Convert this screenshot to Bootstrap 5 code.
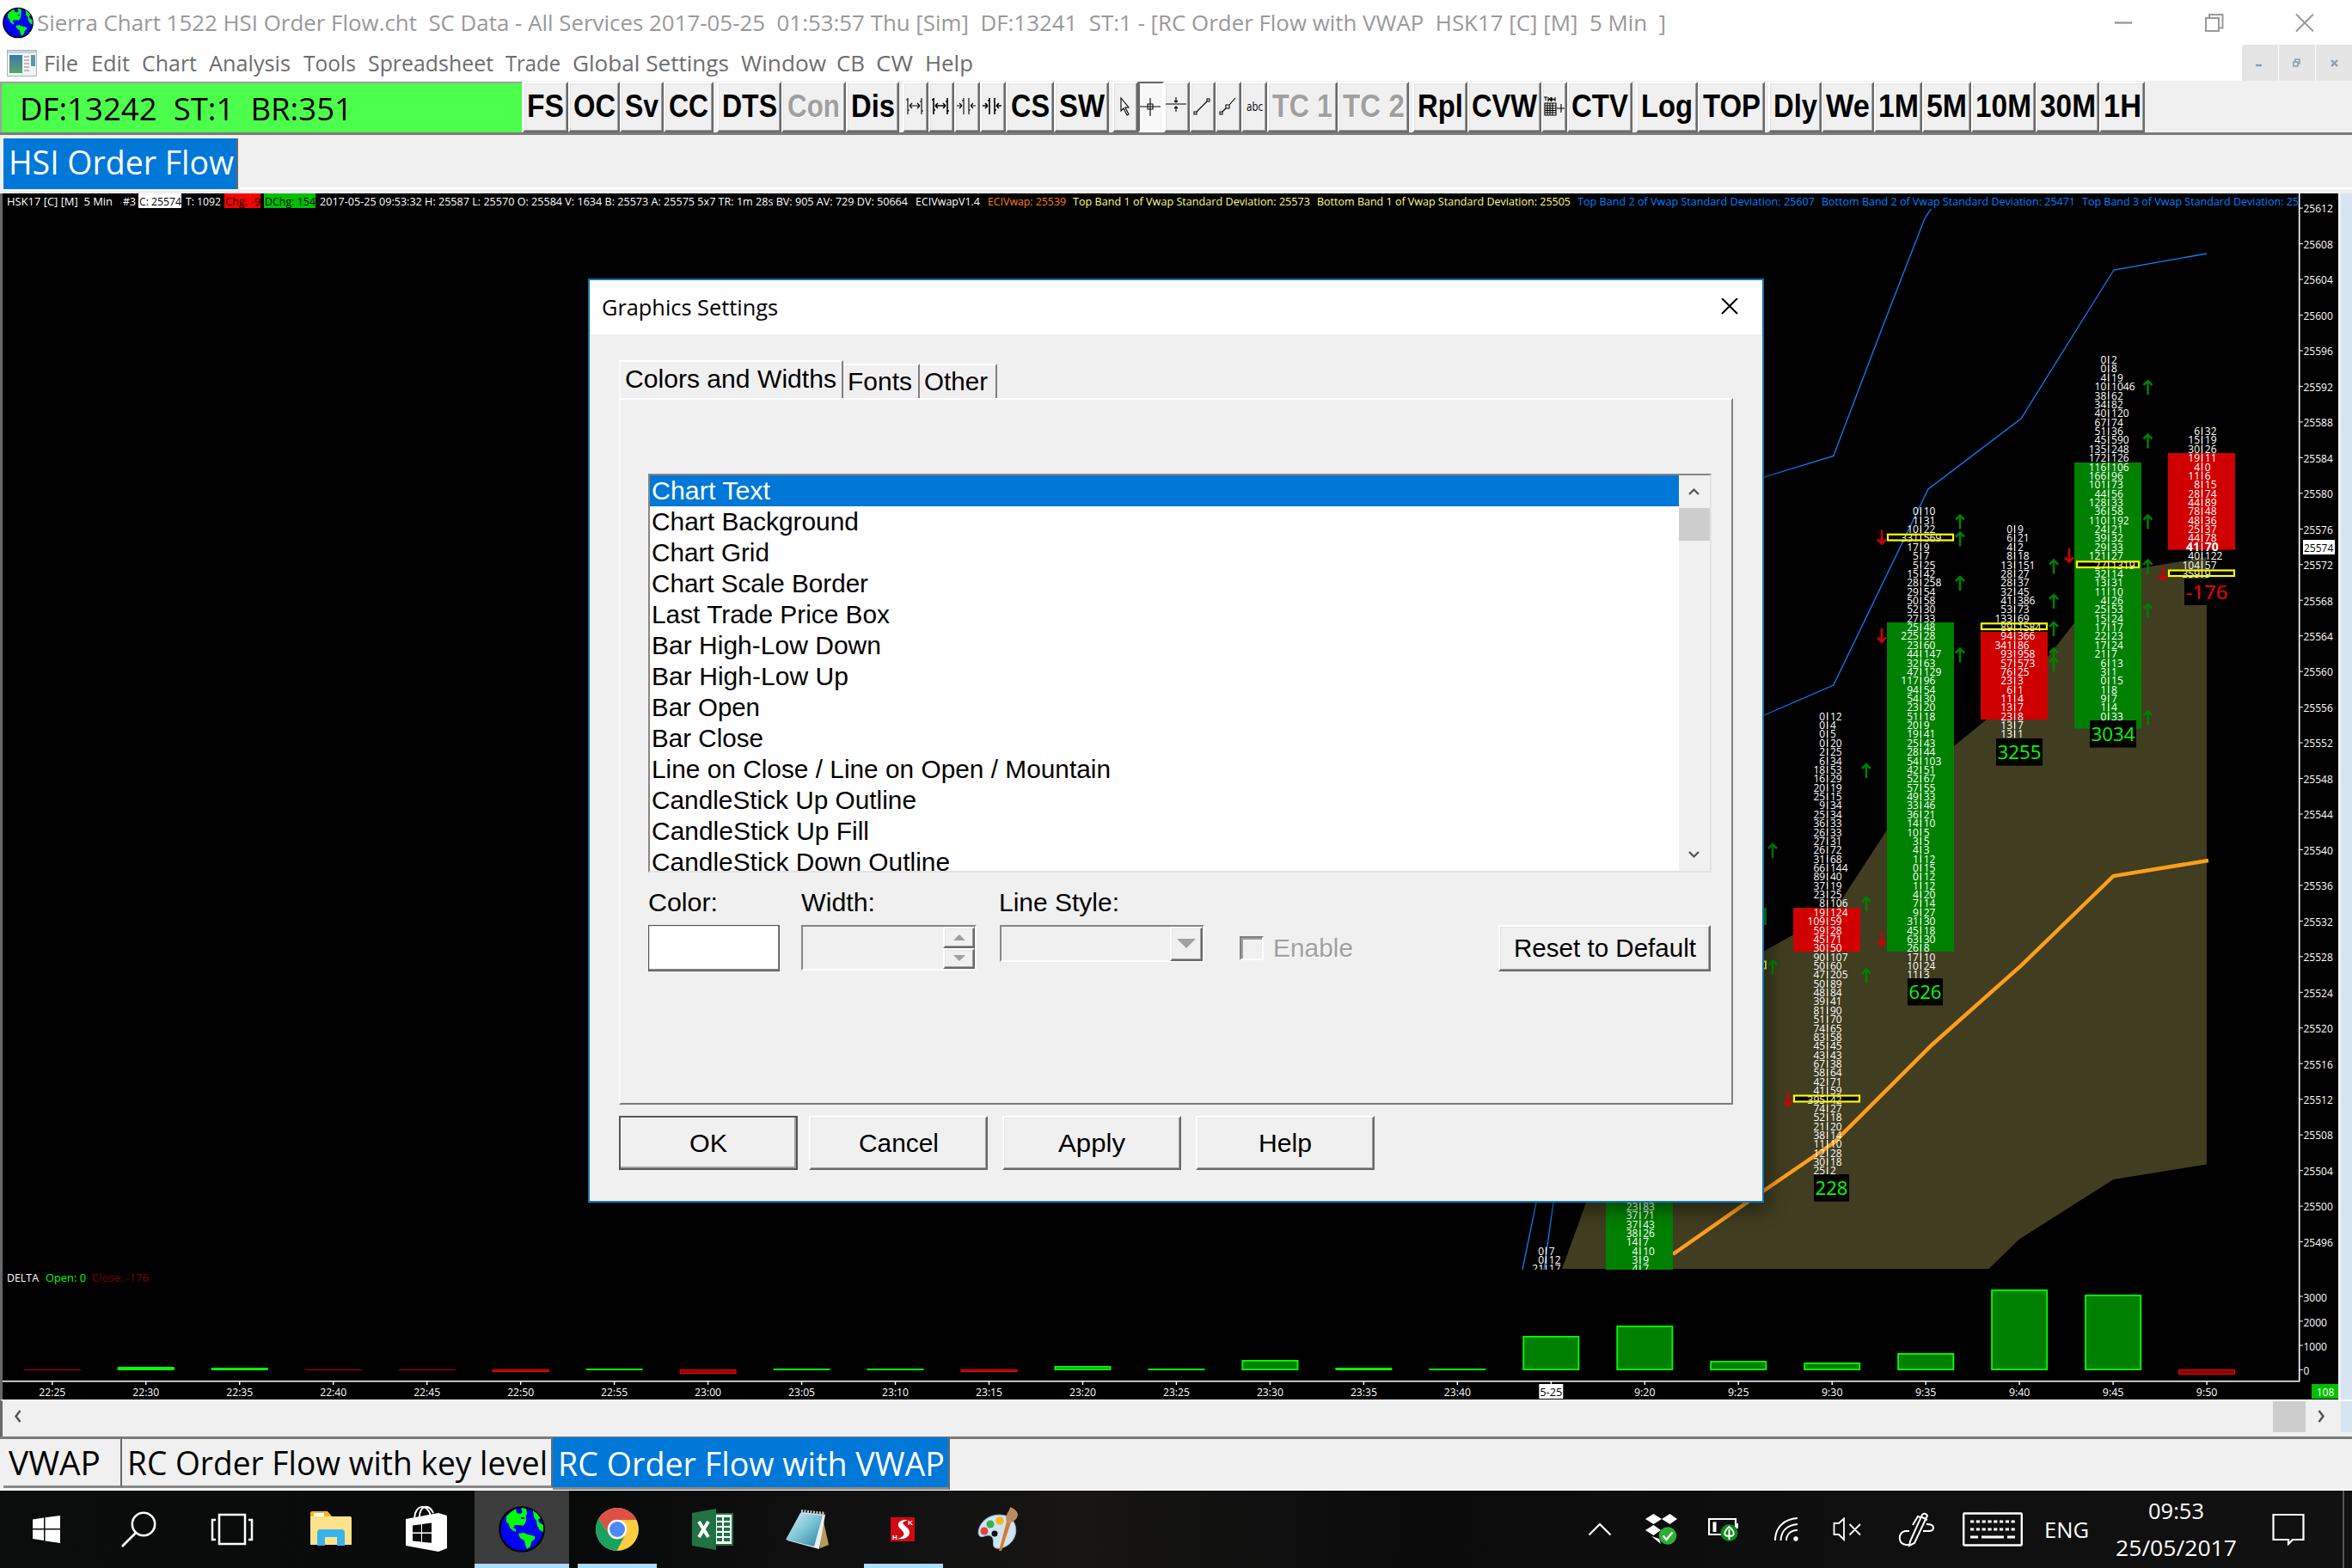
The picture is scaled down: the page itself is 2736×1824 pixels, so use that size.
<!DOCTYPE html>
<html lang="en">
<head>
<meta charset="utf-8">
<title>Sierra Chart - Graphics Settings</title>
<link rel="stylesheet" href="https://cdn.jsdelivr.net/npm/bootstrap@5.3.0/dist/css/bootstrap.min.css">
<style>
  html, body { width: 2736px; height: 1824px; overflow: hidden; }
  body { background: #f0f0f0; color: #000; font-family: "Open Sans", "Noto Sans", sans-serif; font-size: 26px; line-height: 1; }
  .arial { font-family: "Liberation Sans", Arial, sans-serif; }
  .fit { display: inline-block; white-space: pre; transform-origin: 0 50%; }
  svg { display: block; flex: none; }
  .raised { background: #f0f0f0; border: 2px solid; border-color: #fff #696969 #696969 #fff; box-shadow: inset -1px -1px 0 #a0a0a0, inset 1px 1px 0 #e3e3e3; }
  .sunken { border: 2px solid; border-color: #868686 #fff #fff #868686; }

  .titlebar { height: 52px; background: #fff; color: #999; padding-left: 3px; }
  .titlebar .caption { padding-left: 4px; line-height: 53px; }
  .win-ctl { margin-right: 45px; }
  .menubar { height: 42px; background: #fff; color: #6d6d6d; padding-left: 8px; }
  .menubar .entries { padding-left: 8px; line-height: 42px; }
  .menu-gap { display: inline-block; }
  .mdi span { width: 42px; height: 42px; background: #e5e5e5; }
  .mdi { gap: 1px; }
  .toolbar { height: 63px; border-bottom: 3px solid #7b7b7b; }
  .status { width: 607px; height: 59px; margin-top: 1px; padding-left: 21px; background: #4dff4d; border-top: 2px solid #a0a0a0; border-left: 2px solid #a0a0a0; font-size: 37px; line-height: 57px; }
  .tools { margin-left: 1px; padding-top: 1px; }
  .tb { height: 59px; padding-bottom: 3px; font-size: 37px; font-weight: bold; }
  .tb svg { margin-top: 3px; }
  .tb.off { color: #a0a0a0; text-shadow: 1px 1px 0 #fff; }
  .tb.down { background: #f8f8f8; border-color: #696969 #fff #fff #696969; box-shadow: none; }
  .tb.tiny { font-family: "Open Sans", sans-serif; font-weight: normal; font-size: 15px; }
  .tb.gapped { margin-right: 4px; }
  .books-top { height: 68px; padding: 4px 0 0 4px; }
  .books-top .booktab { width: 273px; height: 59px; padding-left: 6px; line-height: 55px; }
  .books-top .filler { height: 59px; border-bottom: 2px solid #fff; }
  .booktab { font-size: 38px; }
  .booktab.current { background: #0078d7; color: #fff; border-right: 2px solid #696969; }
  .chart-row { height: 1403px; border-left: 3px solid #696969; }
  .edge { width: 13px; background: #d7e4f2; }
  .hscroll { height: 43px; border-top: 2px solid #fff; border-left: 3px solid #696969; }
  .hscroll .edge, .hscroll .thumb { height: 36px; }
  .hscroll .thumb { width: 38px; background: #cdcdcd; }
  .books-bottom { height: 63px; border-top: 3px solid #7b7b7b; border-bottom: 2px solid #fff; padding-left: 4px; }
  .books-bottom .booktab { height: 57px; padding-left: 6px; line-height: 54px; border-bottom: 3px solid #8a8a8a; border-right: 2px solid #696969; }
  .books-bottom .current { height: 61px; margin-top: -2px; line-height: 61px; }
  .bt-a { width: 138px; } .bt-b { width: 501px; } .bt-c { width: 462px; }

  .taskbar { height: 90px; color: #fff; background: linear-gradient(90deg, #0b0c0c 0, #080909 25%, #101010 35%, #161514 46%, #0b0b0b 60%, #0f0f0f 80%, #111 100%); }
  .tile { flex: none; width: 110.8px; height: 90px; }
  .tile.sys { width: 108px; }
  .tile.lead-app { margin-left: 6px; }
  .tile.active { background: #3c3c3c; border-bottom: 5px solid #a9dcff; padding-top: 5px; }
  .tile.running { position: relative; }
  .tile.running::after { content: ""; position: absolute; left: 10px; right: 9px; bottom: 0; height: 5px; background: #a9dcff; }
  .cell { width: 72.4px; }
  .cell.spk { width: 69px; }
  .cell.pen { width: 92px; }
  .cell.mid { width: 86px; }
  .cell.note { width: 94px; }
  .clock { width: 168px; line-height: 43px; }
  .showdesk { width: 11px; height: 90px; border-left: 2px solid #555; }

  .dlg { position: absolute; left: 684px; top: 324px; width: 1368px; height: 1075px; border: 2px solid #1176b0; background: #f0f0f0; box-shadow: 4px 8px 22px rgba(0,0,0,.45); }
  .dlg-head { height: 63px; background: #fff; padding: 0 28px 2px 14px; }
  .dlg-body { padding: 33px 34px 0 34px; font-size: 29.5px; }
  .tabs { height: 41px; }
  .tabs > div { height: 40px; border-top: 2px solid #fff; border-right: 2px solid #808080; padding-left: 5px; line-height: 37px; }
  .tabs > .first { height: 44px; padding-left: 5px; width: 261px; border-left: 2px solid #fafafa; line-height: 40px; position: relative; background: #f0f0f0; }
  .tab-f { width: 89px; } .tab-o { width: 90px; }
  .page { height: 822px; border: 2px solid; border-color: #fff #808080 #7b7b7b #fafafa; padding: 86px 23px 0 32px; }
  .listbox { height: 464px; background: #fff; border: 2px solid; border-color: #868686 #e3e3e3 #e3e3e3 #868686; }
  .listbox .names { height: 460px; }
  .listbox .names div { height: 36px; line-height: 36px; padding-left: 2px; }
  .listbox .names .sel { background: #0078d7; color: #fff; }
  .vscroll { width: 36px; background: #f0f0f0; }
  .vscroll .knob { height: 38px; background: #cdcdcd; }
  .lbl { height: 36px; margin-top: 17px; line-height: 36px; }
  .lbl-c { width: 178px; } .lbl-w { width: 230px; }
  .swatch { width: 153px; height: 54px; background: #fff; border: 1px solid #555; box-shadow: inset -1px -2px 0 #808080, inset 1px 1px 0 #e3e3e3; }
  .spin { width: 204px; height: 53px; margin-left: 25px; }
  .spin .raised { width: 37px; height: 25px; }
  .combo { width: 238px; height: 43px; margin-left: 27px; }
  .combo .raised { width: 38px; height: 40px; }
  .chk { width: 28px; height: 28px; margin: 13px 11px 0 41px; border: 2px solid; border-color: #808080 #fff #fff #808080; box-shadow: inset 2px 2px 0 #a0a0a0; }
  .gray { color: #a0a0a0; text-shadow: 1px 1px 0 #fff; line-height: 54px; }
  .push { height: 63px; width: 208px; }
  .push.default { border-color: #555; box-shadow: inset -2px -2px 0 #a0a0a0, inset 1px 1px 0 #fff; }
  .push + .push { margin-left: 17px; }
  .push.default + .push { margin-left: 13px; }
  .reset { width: 247px; height: 54px; margin-left: 169px; }
  .dlg-foot { padding-top: 13px; }
</style>
</head>
<body>
<svg width="0" height="0" class="position-absolute">
  <symbol id="globe" viewBox="0 0 54 54">
    <circle cx="27" cy="27" r="25.6" fill="#00f" stroke="#000" stroke-width="2.4"/>
    <path fill="#0f0" d="M9 12L13 8L20 3L21 8L25 9L28 7L26 4L27 2L32 3L33 8L32 12L32 17L30 21L28 23L25 22L19 22L17 25L20 27L20 30L16 28L13 25L12 21L9 18Z"/>
    <path fill="#0f0" d="M23 32L29 31L34 33L42 35L42 38L38 42L37 47L33 50L31 45L30 40L25 37Z"/>
    <path fill="#0f0" d="M40 5L45 9L49 14L46 15L47 19L52 22L52 30L48 28L45 23L44 17L41 13Z"/>
    <path fill="#00f" d="M24 4h3v3h-3zM26 13h4v2h-4z"/>
  </symbol>
</svg>

<header>
  <div class="titlebar d-flex align-items-center">
    <svg width="36" height="37"><use href="#globe"/></svg>
    <div class="caption"><span class="fit" data-w="1895">Sierra Chart 1522 HSI Order Flow.cht  SC Data - All Services 2017-05-25  01:53:57 Thu [Sim]  DF:13241  ST:1 - [RC Order Flow with VWAP  HSK17 [C] [M]  5 Min  ]</span></div>
    <svg class="win-ctl ms-auto" width="231" height="30" fill="none" stroke="#999" stroke-width="2" viewBox="2461 9 231 30">
      <path d="M2461 24.500h20" stroke-width="2.400"/><path d="M2567 19h15v15h-15z M2571 19v-4h15.500v15.500h-4"/><path d="M2672 14.500l20 20m0-20l-20 20"/>
    </svg>
  </div>
  <div class="menubar d-flex align-items-center">
    <svg width="35" height="31">
      <defs><linearGradient id="mg" x1="0" y1="0" x2="0" y2="1"><stop offset="0" stop-color="#3a78b0"/><stop offset="1" stop-color="#5aa56a"/></linearGradient></defs>
      <rect x=".5" y=".5" width="34" height="30" fill="#f2f4f6" stroke="#a9b3bc"/><rect x="1" y="1" width="33" height="3" fill="#c8d4e0"/>
      <rect x="3" y="6" width="15" height="21" fill="url(#mg)"/><rect x="28" y="6" width="5" height="13" fill="#5a97a8"/>
      <path d="M20 8h6m-6 4h6m-6 4h6m-6 4h6m-6 4h6" stroke="#a8a8a8" stroke-width="1.500"/>
    </svg>
    <div class="entries" id="menus"></div>
    <div class="mdi d-flex ms-auto">
      <span><svg width="42" height="42"><path d="M16 24h7" stroke="#8c9db0" stroke-width="2.500"/></svg></span>
      <span><svg width="42" height="42" fill="none" stroke="#8c9db0" stroke-width="1.600"><path d="M17 20h5v5h-5z M19 20v-3h5v5h-2"/></svg></span>
      <span><svg width="42" height="42"><path d="M18 18l7 7m0-7l-7 7" stroke="#8c9db0" stroke-width="2.400"/></svg></span>
    </div>
  </div>
  <div class="toolbar d-flex">
    <div class="status"><span class="fit" data-w="387">DF:13242  ST:1  BR:351</span></div>
    <div class="tools d-flex arial" id="tools"></div>
  </div>
  <div class="books-top d-flex">
    <div class="booktab current"><span class="fit" data-w="262">HSI Order Flow</span></div>
    <div class="filler flex-grow-1"></div>
  </div>
</header>

<main>
  <div class="chart-row d-flex">
    <svg id="chart" width="2718" height="1403" viewBox="3 225 2718 1403" font-family="'Open Sans','Noto Sans',sans-serif" font-size="12" fill="#fff"></svg>
    <div class="edge ms-auto"></div>
  </div>
  <div class="hscroll d-flex">
    <svg width="40" height="36"><path d="M20.500 11l-5 6.500 5 6.500" fill="none" stroke="#505050" stroke-width="2.400"/></svg>
    <div class="thumb ms-auto"></div>
    <svg width="41" height="36"><path d="M15.500 11l5 6.500-5 6.500" fill="none" stroke="#505050" stroke-width="2.400"/></svg>
    <div class="edge"></div>
  </div>
  <nav class="books-bottom d-flex">
    <div class="booktab bt-a"><span class="fit" data-w="107">VWAP</span></div>
    <div class="booktab bt-b"><span class="fit" data-w="489">RC Order Flow with key level</span></div>
    <div class="booktab current bt-c"><span class="fit" data-w="450">RC Order Flow with VWAP</span></div>
  </nav>
</main>

<footer class="taskbar d-flex align-items-center">
  <div class="tile sys d-flex align-items-center justify-content-center"><svg width="34" height="34" fill="#fff"><path d="M1 5.500L14 3.500V16H1z M15.500 3.300L33 1V16H15.500z M1 17.500H14V30L1 28z M15.500 17.500H33V33L15.500 30.500z"/></svg></div>
  <div class="tile sys d-flex align-items-center justify-content-center"><svg width="44" height="44" fill="none" stroke="#fff" stroke-width="2.600"><circle cx="27" cy="16" r="13.200"/><path d="M18 26L2 42"/></svg></div>
  <div class="tile sys d-flex align-items-center justify-content-center"><svg width="50" height="40" fill="none" stroke="#fff" stroke-width="2.500"><path d="M10 3h30v34H10z M6 9H2v23h4 M44 9h4v23h-4"/></svg></div>
  <div class="tile lead-app d-flex align-items-center justify-content-center"><svg width="48" height="44"><path d="M0 3q0-2 2-2h18l5 6H0z" fill="#f5b820"/><path d="M0 7h46q2 0 2 2v31H0z" fill="#ffe38c"/><path d="M4 3h12v4H4z" fill="#fff"/><path d="M8 41V26q0-4 4-4h24q4 0 4 4v15h-9V31H17v10z" fill="#38b4ea"/></svg></div>
  <div class="tile d-flex align-items-center justify-content-center"><svg width="50" height="56"><path d="M11 15C12-1 26-3 30 12M17 14C17 0 28-2 33 9" fill="none" stroke="#fff" stroke-width="2"/><path d="M1 16L39 9L49 12V50L39 54L1 47z" fill="#fff"/><path d="M9 23.500L19 22.300V31.500H9z M20 22L31 20.500V31.500H20z M9 33H19v9.500L9 41.500z M20 33H31v10.700L20 42.700z" fill="#0a0a0a"/></svg></div>
  <div class="tile active d-flex align-items-center justify-content-center"><svg width="54" height="54"><use href="#globe"/></svg></div>
  <div class="tile running d-flex align-items-center justify-content-center"><svg width="50" height="50" viewBox="-25 -25 50 50"><circle r="25" fill="#ffcd40"/><path d="M-21.600-12.500A25 25 0 0 1 22.400-11H0A11 11 0 0 0-10 5z" fill="#dd5144"/><path d="M-21.600-12.500A25 25 0 0 0-.5 25L9.500 6 A11 11 0 0 1-10 5z" fill="#1ba261"/><circle r="11.200" fill="#fff"/><circle r="9" fill="#4c8bf5"/></svg></div>
  <div class="tile d-flex align-items-center justify-content-center"><svg width="48" height="48"><path d="M26 6H47V42H26z" fill="#fff" stroke="#207245" stroke-width="2"/><path d="M29 10h6v4h-6z M37 10h7v4h-7z M29 16h6v4h-6z M37 16h7v4h-7z M29 22h6v4h-6z M37 22h7v4h-7z M29 28h6v4h-6z M37 28h7v4h-7z M29 34h6v4h-6z M37 34h7v4h-7z" fill="#207245"/><path d="M0 5L28 0V48L0 43z" fill="#207245"/><path d="M8 15L19 33M19 15L8 33" stroke="#fff" stroke-width="4"/></svg></div>
  <div class="tile d-flex align-items-center justify-content-center"><svg width="50" height="48"><defs><linearGradient id="np" x1="0" y1="0" x2="1" y2="1"><stop offset="0" stop-color="#d4f1f7"/><stop offset=".5" stop-color="#7cc3d6"/><stop offset="1" stop-color="#2e7f99"/></linearGradient></defs><path d="M42 6L50 42L40 46z" fill="#b99a55"/><path d="M18 4L46 7L39 47L2 37z" fill="#e9eef0"/><path d="M17 5L43 8L33 44L0 36z" fill="url(#np)"/><path d="M18 3L46 6" stroke="#ccc" stroke-width="4" stroke-dasharray="2 1.500"/></svg></div>
  <div class="tile running d-flex align-items-center justify-content-center"><svg width="28" height="28"><rect width="28" height="28" fill="#cf0a12"/><path d="M20 3C10 2 6 8 11 13S19 21 8 25C20 27 26 18 19 12S13 6 20 3z" fill="#fff"/><text x="20" y="8.500" font-size="8" font-weight="bold" fill="#fff" class="arial">K</text><text x="2" y="26" font-size="8" font-weight="bold" fill="#fff" class="arial">H</text></svg></div>
  <div class="tile d-flex align-items-center justify-content-center"><svg width="52" height="52"><path d="M3 30C4 14 22 5 37 11C52 18 50 43 29 48C15 50 24 38 18 34S5 40 3 30z" fill="#cfe4f2" stroke="#8fb6cf"/><circle cx="10" cy="28" r="4.500" fill="#e8413a"/><circle cx="17" cy="20" r="4.500" fill="#3fae49"/><circle cx="28" cy="16" r="4.800" fill="#f8b61c"/><circle cx="22" cy="31" r="3.500" fill="#0d0d0d"/><path d="M27 51L36 17L41 18L30 51z" fill="#d77a2c"/><path d="M36 17C33 9 40 5 40 0C50 4 53 11 42 18z" fill="#b98d62"/></svg></div>

  <div class="ms-auto d-flex align-items-center">
    <div class="cell d-flex justify-content-center"><svg width="28" height="16" fill="none" stroke="#fff" stroke-width="2.200"><path d="M1.500 14.500L14 2L26.500 14.500"/></svg></div>
    <div class="cell d-flex justify-content-center"><svg width="38" height="36"><path d="M9.500 0L19 6L9.500 12L0 6z M28.500 0L37 6L28.500 12L19 6z M9.500 13L18 19L9.500 25L0 19z M7 26l9 3 2 6z" fill="#fff"/><circle cx="26" cy="25.500" r="10.300" fill="#2eae34"/><path d="M20.500 25.500l4 4.500 7-8.500" fill="none" stroke="#fff" stroke-width="2.400"/></svg></div>
    <div class="cell d-flex justify-content-center"><svg width="36" height="28"><path d="M1 2h31v18H1z" fill="none" stroke="#fff" stroke-width="2.200"/><path d="M5.500 5.500h4v11.500h-4z M33 7h2v6h-2z" fill="#fff"/><circle cx="24.500" cy="18" r="10" fill="#0b8a1b"/><path d="M24.500 26V14M24.500 11c-7 6-7 11 0 11s7-5 0-11z" fill="none" stroke="#fff" stroke-width="2"/></svg></div>
    <div class="cell d-flex justify-content-center"><svg width="30" height="30" fill="none" stroke="#fff" stroke-width="2"><path d="M2 28C2 13 12 3 28 2M8.500 28C9 17 16 10 28 9M15 28C15 21 20 16 28 16"/><circle cx="26" cy="26" r="2.700" fill="#fff" stroke="none"/></svg></div>
    <div class="cell spk d-flex justify-content-center"><svg width="34" height="28" fill="none" stroke="#fff" stroke-width="1.800"><path d="M1.500 7v13H7l6 6V1.500L7 7z M19.500 8l12.500 12.500M32 8L19.500 20.500"/></svg></div>
    <div class="cell pen d-flex justify-content-center"><svg width="42" height="42" fill="none" stroke="#fff" stroke-width="2"><path d="M14 35L28 4q3-3 6 1L19 37l-6 3z M28 7l6 3M26 7l-3-1-6 10M13 23H8q-7 2-6 10q1 5 7 6h6M33 15q8 0 8 4t-5 4h-7"/></svg></div>
    <div class="cell mid d-flex justify-content-center"><svg width="70" height="40"><rect x="1.200" y="1.500" width="67.600" height="37" rx="1" fill="none" stroke="#fff" stroke-width="2.400"/><path d="M9 11h52M9 20h52" stroke="#fff" stroke-width="3" stroke-dasharray="4.200 2.600"/><path d="M9 29h9M22 29h26M52 29h9" stroke="#fff" stroke-width="3"/></svg></div>
    <div class="cell mid d-flex justify-content-center"><span class="fit" data-w="52">ENG</span></div>
    <div class="clock d-flex flex-column align-items-center"><span class="fit" data-w="65">09:53</span><span class="fit" data-w="141">25/05/2017</span></div>
    <div class="cell note d-flex justify-content-center"><svg width="38" height="38" fill="none" stroke="#fff" stroke-width="2.200"><path d="M1.500 2h35v29H24l-5 5v-5H1.500z"/></svg></div>
    <div class="showdesk ms-3"></div>
  </div>
</footer>

<section class="dlg">
  <div class="dlg-head d-flex align-items-center">
    <span class="fit" data-w="205">Graphics Settings</span>
    <svg class="ms-auto" width="20" height="20"><path d="M1 0l18 18m0-18L1 18" stroke="#000" stroke-width="2"/></svg>
  </div>
  <div class="dlg-body arial">
    <div class="tabs d-flex align-items-end">
      <div class="first"><span class="fit" data-w="246">Colors and Widths</span></div>
      <div class="tab-f"><span class="fit" data-w="75">Fonts</span></div>
      <div class="tab-o"><span class="fit" data-w="74">Other</span></div>
    </div>
    <div class="page">
      <div class="listbox d-flex">
        <div class="names flex-grow-1 overflow-hidden" id="names"></div>
        <div class="vscroll d-flex flex-column">
          <svg width="36" height="38"><path d="M12 22l5.500-5.500L23 22" fill="none" stroke="#505050" stroke-width="2.200"/></svg>
          <div class="knob"></div>
          <svg class="mt-auto" width="36" height="38"><path d="M12 16l5.500 5.500L23 16" fill="none" stroke="#505050" stroke-width="2.200"/></svg>
        </div>
      </div>
      <div class="lbl d-flex">
        <div class="lbl-c"><span class="fit" data-w="81">Color:</span></div>
        <div class="lbl-w"><span class="fit" data-w="86">Width:</span></div>
        <div><span class="fit" data-w="140">Line Style:</span></div>
      </div>
      <div class="d-flex align-items-start mt-2">
        <div class="swatch"></div>
        <div class="spin sunken d-flex flex-column align-items-end">
          <div class="raised d-flex align-items-center justify-content-center"><svg width="14" height="8"><path d="M0 8L7 1l7 7z" fill="#a0a0a0"/></svg></div>
          <div class="raised d-flex align-items-center justify-content-center"><svg width="14" height="8"><path d="M0 0h14L7 7z" fill="#a0a0a0"/></svg></div>
        </div>
        <div class="combo sunken d-flex justify-content-end"><div class="raised d-flex align-items-center justify-content-center"><svg width="22" height="12"><path d="M0 0h22L11 11z" fill="#a0a0a0"/></svg></div></div>
        <div class="chk"></div>
        <div class="gray"><span class="fit" data-w="93">Enable</span></div>
        <div class="reset raised d-flex align-items-center justify-content-center"><span class="fit" data-w="212">Reset to Default</span></div>
      </div>
    </div>
    <div class="dlg-foot d-flex">
      <div class="push default raised d-flex align-items-center justify-content-center"><span class="fit" data-w="44">OK</span></div>
      <div class="push raised d-flex align-items-center justify-content-center"><span class="fit" data-w="93">Cancel</span></div>
      <div class="push raised d-flex align-items-center justify-content-center"><span class="fit" data-w="78">Apply</span></div>
      <div class="push raised d-flex align-items-center justify-content-center"><span class="fit" data-w="62">Help</span></div>
    </div>
  </div>
</section>

<script src="https://cdn.jsdelivr.net/npm/bootstrap@5.3.0/dist/js/bootstrap.bundle.min.js"></script>
<script>
// Menu entries: label, width, gap to the next one
document.getElementById('menus').innerHTML = [['File',40,15],['Edit',45,14],['Chart',64,14],['Analysis',95,15],['Tools',61,14],['Spreadsheet',146,14],['Trade',64,14],['Global Settings',182,14],['Window',99,12],['CB',33,13],['CW',43,14],['Help',56,0]]
  .map(m => `<span class="fit" data-w="${m[1]}">${m[0]}</span><span class="menu-gap" style="width:${m[2]}px"></span>`).join('');

// Small toolbar glyphs
const glyph = {
  w1: 'M3 1V20M19 1V20M5 10H17M5 10l3-3M5 10l3 3M17 10l-3-3M17 10l-3 3M1 3h2M3 15h2M17 5h2M19 16h2',
  n1: 'M8 1V20M14 1V20M0 10H6M6 10l-3-3M6 10l-3 3M22 10H16M16 10l3-3M16 10l3 3M6 4h2M14 15h2',
  arrow: 'M7 1V16l3-3 4 8 2-1-4-8h4z',
  cross: 'M-1 11H23M11 1V22M8 8h6v6H8z',
  split: 'M-1 8H23M11 0V6M9 4l2 2 2-2M11 17V11M9 13l2-2 2 2',
  line: 'M5 17L17 5M2 17h3v3H2zM17 2h3v3h-3z',
  ray: 'M5 17L9 13M13 9L20 1M2 17h3v3H2zM9 9h4v4H9z',
  grid: 'M1 7h13v14H1zM1 10h13M1 13h13M1 15.500h13M1 18h13M4 7v14M7 7v14M10 7v14M15 13h9M20 8v10M0 0h4M2 0v4M5 0v4l1.500-2 1.500 2V0M9 0v4l2-2 2 2V0'
};
const tools = [['FS',53,43],['OC',60,49],['Sv',51,39],['CC',58,46,1],['DTS',75,64],['Con',75,61,0,'off'],['Dis',62,51,1],
  ['*w1',30],['*w1',30,2],['*n1',30],['*n1',30,2],['CS',56,45],['SW',64,53,1],
  ['*arrow',30],['*cross',30,1,0,'down'],['*split',30],['*line',30],['*ray',30],['abc',30,19,0,'tiny'],['TC 1',82,70,0,'off'],['TC 2',83,72,1,'off'],
  ['Rpl',64,53],['CVW',86,76],['*grid',30],['CTV',76,66,1],['Log',72,60],['TOP',78,67,1],
  ['Dly',62,51],['We',61,51],['1M',56,47],['5M',57,47],['10M',75,65],['30M',74,65],['1H',53,44]];
document.getElementById('tools').innerHTML = tools.map(t => {
  const inner = t[0][0] === '*'
    ? `<svg width="24" height="23" overflow="visible"><path d="${glyph[t[0].slice(1)]}" fill="none" stroke="#000" stroke-width="${t[2] === 2 ? 1.6 : 1.1}"/></svg>`
    : `<span class="fit" data-w="${t[2]}">${t[0]}</span>`;
  return `<div class="tb raised d-flex align-items-center justify-content-center ${t[4] || ''} ${t[3] ? 'gapped' : ''}" style="width:${t[1]}px">${inner}</div>`;
}).join('');

// Graphics settings list
const nameW = {'Chart Text':138,'Chart Background':241,'Chart Grid':137,'Chart Scale Border':252,'Last Trade Price Box':277,'Bar High-Low Down':267,'Bar High-Low Up':229,'Bar Open':126,'Bar Close':130,'Line on Close / Line on Open / Mountain':534,'CandleStick Up Outline':308,'CandleStick Up Fill':253,'CandleStick Down Outline':347};
document.getElementById('names').innerHTML = Object.keys(nameW).map((n, i) => `<div class="${i ? '' : 'sel'}"><span class="fit" data-w="${nameW[n]}">${n}</span></div>`).join('');

// Chart drawing
const Y = p => 242.6 + (25612 - p) * 10.366;
const out = [];
const rect = (x, y, x2, y2, a) => out.push(`<rect x="${x}" y="${y}" width="${x2 - x}" height="${y2 - y}" ${a}/>`);
const text = (x, y, s, a = '') => out.push(`<text x="${x}" y="${y}" ${a}>${s}</text>`);
rect(3, 225, 2720, 1628, 'fill="#000"');
out.push('<clipPath id="pane"><rect x="3" y="243" width="2671" height="1234"/></clipPath><g clip-path="url(#pane)">');
out.push('<path fill="#403d20" d="M2567 648L2491 660.700L2459 666L2350 805L2242 893L2133 1061L2052 1106.600L1925 1200L1845 1399L1817 1476H2313.500L2349 1441.500L2458.500 1372L2567 1354.500z"/>');
out.push('<g fill="none" stroke="#0a80ff" stroke-width="1.300"><path d="M2247 242L2239 254L2190 380L2132.800 530.400L2052 555"/><path d="M2567 295L2459 314L2417.700 380L2351 487L2243 569L2132.800 797L2052 832"/><path d="M1787 1399L1771 1477M1807 1399L1796 1477"/></g>');
out.push('<path fill="none" stroke="#ff9e1b" stroke-width="4.500" d="M2569 1001L2458.500 1019L2352 1122.400L2247 1215.700L2132.800 1329.600L2052 1385L1946 1459"/>');
const G = '#008000', R = '#d00000';
const cols = [
 {x:1798.5, top:25495, rows:'0|7,0|12,21|17'},
 {x:1907.9, top:25500, body:[1868,1300,1946,1477,G], rows:'23|83,37|71,37|43,38|26,14|7,4|10,3|9,4|7'},
 {x:2125.7, top:25555, body:[2086,1056,2164,1107,R], box:[2086,1273.5,2164,1282.5], rows:'0|12,0|4,0|5,0|20,2|25,6|34,18|53,16|29,20|19,25|15,9|34,25|34,36|33,26|33,27|31,26|72,31|68,66|144,89|40,37|19,23|25,8|106,19|124,109|59,59|28,45|71,30|50,90|107,50|60,47|205,50|89,48|84,39|41,81|90,51|70,74|65,83|58,45|45,43|43,67|38,58|64,42|71,41|59,395|42,74|27,52|18,21|20,38|14,11|10,12|28,30|18,25|2'},
 {x:2234.4, top:25578, body:[2195,724,2273,1107,G], box:[2195,620.7,2273,629.5], rows:'0|10,1|31,10|22,331|569,17|9,5|7,5|25,15|42,28|258,29|54,50|58,52|30,27|33,25|48,225|28,23|60,44|147,32|63,47|129,117|96,94|54,54|30,23|20,51|18,20|9,19|41,25|43,28|44,54|103,42|51,52|67,57|55,49|33,33|46,36|21,14|10,10|5,3|5,4|3,1|12,0|15,0|12,1|12,4|20,7|14,9|27,31|30,45|18,63|30,26|8,17|10,10|24,11|3'},
 {x:2343.6, top:25576, body:[2304,735,2382,837,R], box:[2304,724.3,2382,733], rows:'0|9,6|21,4|2,8|18,13|151,28|27,28|37,32|45,41|386,53|73,133|69,89|1584,94|366,341|86,93|958,57|573,76|25,23|3,6|1,11|4,13|7,23|8,13|7,13|1'},
 {x:2452.8, top:25595, body:[2413,538,2491,847.5,G], box:[2415,652.3,2489,661], rows:'0|2,0|8,4|19,10|1046,38|62,34|82,40|120,67|74,51|36,45|590,135|248,172|126,116|106,166|96,101|73,44|56,128|33,36|58,110|192,24|21,39|32,29|33,121|27,27|1319,32|14,13|31,11|10,4|26,25|53,15|24,17|17,22|23,17|24,21|7,6|13,3|1,0|15,1|8,9|7,1|4,0|33'},
 {x:2561.5, top:25587, body:[2522,527,2600,639.6,R], box:[2522,662.5,2600,671], rows:'6|32,15|19,30|26,19|11,4|0,11|6,8|15,28|74,44|89,78|48,48|36,25|37,44|78,41|70*,40|122,104|57,359|9'}
];
rect(2040, 1056, 2055, 1076, 'fill="#008000"');
rect(2040, 1118.5, 2054, 1126.5, 'fill="#000" stroke="#ff0" stroke-width="2"');
for (const c of cols) {
  if (c.body) rect(c.body[0], c.body[1], c.body[2], c.body[3], `fill="${c.body[4]}"`);
  if (c.box) rect(c.box[0], c.box[1], c.box[2], c.box[3], 'fill="#000"');
  const rows = c.rows.split(',');
  out.push(`<path d="M${c.x} ${Y(c.top) - 5}V${Y(c.top) - 5 + rows.length * 10.366}" stroke="#fff" stroke-width="1.300" stroke-dasharray="9.400 .966"/>`);
  rows.forEach((r, i) => {
    const bold = r.endsWith('*'), [a, b] = r.replace('*', '').split('|'), y = Y(c.top - i) + 4.3;
    const at = bold ? 'font-weight="bold" font-size="14"' : '';
    text(c.x - 2.5, y, a, 'text-anchor="end" ' + at);
    text(c.x + 3.3, y, b, at);
  });
  if (c.box) rect(c.box[0] + 1, c.box[1] + 1, c.box[2] - 1, c.box[3] - 1, 'fill="none" stroke="#ff0" stroke-width="2.200"');
}
out.push('</g>');
// Net delta tags under each bar
[[2110,1366,2151,1397.6,'228','#0f0'],[2219,1138,2260,1169.5,'626','#0f0'],[2322,859,2376,890.7,'3255','#0f0'],[2431,838,2485,869.6,'3034','#0f0'],[2541,673,2593,704,'-176','#f00']].forEach(t => {
  rect(t[0], t[1], t[2], t[3], 'fill="#000"');
  text(t[0] + 1.5, t[1] + 23.8, t[4], `fill="${t[5]}" font-size="22.500" textLength="${t[2] - t[0] - 3}" lengthAdjust="spacingAndGlyphs"`);
});
// Imbalance arrows
const up = {2062:[980,1115.5], 2171:[887,1042,1125.6], 2280:[597.5,617.5,669,752.5], 2389:[649.6,690,722,752.5,763], 2498.5:[441,503.5,597.5,649.6,700.7,825]};
for (const x in up) for (const y of up[x]) out.push(`<path d="M${x} ${y + 18}V${y + 2}M${x - 5} ${y + 7}L${x} ${y + 2}L${+x + 5} ${y + 7}" fill="none" stroke="#008000" stroke-width="2.500"/>`);
[[2189,616.4],[2189,730.7],[2189,1083.7],[2407,637.5],[2516,658.5],[2080,1270]].forEach(([x, y]) => out.push(`<path d="M${x} ${y}V${y + 16}M${x - 5} ${y + 11}L${x} ${y + 16}L${x + 5} ${y + 11}" fill="none" stroke="#d00000" stroke-width="2.500"/>`));
// Header line
rect(161, 225, 211, 242, 'fill="#fff"'); rect(261, 225, 303, 242, 'fill="#f00"'); rect(307, 225, 367, 242, 'fill="#00c000"');
const fitText = (x, x2, y, s, f) => text(x, y, s, `fill="${f}" xml:space="preserve" textLength="${x2 - x}" lengthAdjust="spacingAndGlyphs"`);
[[8,131,'HSK17 [C] [M]  5 Min','#fff'],[143,158,'#3','#fff'],[162,211,'C: 25574','#000'],[216,257,'T: 1092','#fff'],[262,303,'Chg: -9','#000'],[308,367,'DChg: 154','#000'],
 [372,1056,'2017-05-25 09:53:32 H: 25587 L: 25570 O: 25584 V: 1634 B: 25573 A: 25575 5x7 TR: 1m 28s BV: 905 AV: 729 DV: 50664','#fff'],[1065,1140,'ECIVwapV1.4','#fff'],[1149,1240,'ECIVwap: 25539','#ff8000'],
 [1248,1524,'Top Band 1 of Vwap Standard Deviation: 25573','#ffff80'],[1532,1827,'Bottom Band 1 of Vwap Standard Deviation: 25505','#ffff80'],[1835,2111,'Top Band 2 of Vwap Standard Deviation: 25607','#0080ff'],[2119,2414,'Bottom Band 2 of Vwap Standard Deviation: 25471','#0080ff'],[2422,2674,'Top Band 3 of Vwap Standard Deviation: 25','#0080ff']]
 .forEach(h => fitText(h[0], h[1], 239, h[2], h[3]));
// Price scale
out.push('<path d="M2674.700 225V1607M3 1606.700H2675.500" stroke="#fff" stroke-width="1.600"/>');
for (let p = 25612; p >= 25496; p -= 4) { rect(2675, Y(p) - 1, 2679, Y(p), 'fill="#fff"'); text(2679.5, Y(p) + 4.8, p); }
rect(2679, 628, 2716, 645, 'fill="#fff"'); text(2680, 641.5, '25574', 'fill="#000"');
[[3000,1509.5],[2000,1538.3],[1000,1566.5],[0,1594.8]].forEach(s => { rect(2675, s[1] - 2, 2679, s[1] - 1, 'fill="#fff"'); text(2679.5, s[1] + 4.5, s[0]); });
// Delta study
fitText(8, 45, 1491, 'DELTA', '#fff'); fitText(53, 100, 1491, 'Open: 0', '#0f0'); fitText(107, 173, 1491, 'Close: -176', '#800000');
const times = '22:25 22:30 22:35 22:40 22:45 22:50 22:55 23:00 23:05 23:10 23:15 23:20 23:25 23:30 23:35 23:40 5-25 9:20 9:25 9:30 9:35 9:40 9:45 9:50'.split(' ');
const bars = [-1,4,3,-1,-1,-3,2,-5,2,2,-3,5,2,12,3,2,40,52,11,9,20,94,88,-6];
times.forEach((t, i) => {
  const x = 60.8 + i * 108.97, v = bars[i];
  rect(x - .7, 1607, x + .7, 1611, 'fill="#fff"');
  if (t === '5-25') rect(x - 14, 1610, x + 14, 1627, 'fill="#fff"');
  text(x, 1624.3, t, `text-anchor="middle" ${t === '5-25' ? 'fill="#000"' : ''} textLength="${t.length === 5 ? 31 : t === '5-25' ? 26 : 24.5}" lengthAdjust="spacingAndGlyphs"`);
  const top = v > 0 ? 1594 - v : 1593, h = Math.abs(v), s = v > 0 ? 1.8 : 1.1;
  if (h < 3 || (v > 0 && h < 5)) rect(x - 33, top, x + 33, top + h, `fill="${v > 0 ? '#0f0' : '#c00000'}"`);
  else rect(x - 33 + s / 2, top + s / 2, x + 33 - s / 2, top + h - s / 2, `fill="${v > 0 ? '#008000' : '#800000'}" stroke="${v > 0 ? '#0f0' : '#f00'}" stroke-width="${s}"`);
});
rect(2689, 1610, 2720, 1627, 'fill="#00c000"'); text(2705, 1623.5, '108', 'text-anchor="middle"');
document.getElementById('chart').innerHTML = out.join('');

// Condense labels to their design widths
document.querySelectorAll('.fit').forEach(e => {
  const n = e.getBoundingClientRect().width, w = +e.dataset.w;
  e.style.transform = `scaleX(${w / n})`;
  e.style.marginRight = (w - n) + 'px';
});
</script>
</body>
</html>
